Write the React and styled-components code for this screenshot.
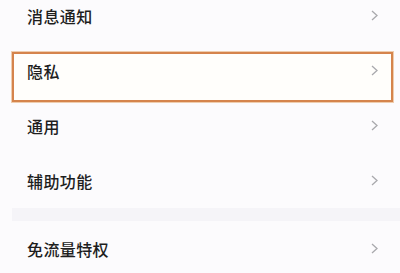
import React from 'react';
import styled, { createGlobalStyle } from 'styled-components';

const Global = createGlobalStyle`
  html, body {
    margin: 0;
    padding: 0;
    background: #fcfbfd;
    overflow: hidden;
  }
  body {
    font-family: "Noto Sans CJK SC", "Noto Sans", sans-serif;
  }
`;

const Page = styled.div`
  width: 400px;
  height: 273px;
  overflow: hidden;
  background: #fcfbfd;
`;

const List = styled.ul`
  list-style: none;
  margin: -12px 0 0 0;
  padding: 0;
`;

const Row = styled.li`
  position: relative;
  height: 55px;
  display: flex;
  align-items: center;
  justify-content: space-between;
  padding: 0 22px 0 27px;
  box-sizing: border-box;
`;

const Label = styled.span`
  position: relative;
  z-index: 1;
  font-size: 16px;
  font-weight: 500;
  color: #1e1e1e;
  letter-spacing: 0.4px;
`;

const Highlight = styled.div`
  position: absolute;
  left: 12px;
  right: 7px;
  top: 9px;
  bottom: -4px;
  background: #fffefb;
  border: 2px solid #d5844c;
  box-shadow: 0 0 0 1px #efcdae;
`;

const Gap = styled.li`
  height: 13px;
  background: #f5f4f8;
  margin: 0 0 0 12px;
`;

const Chevron = () => (
  <svg width="7" height="11" viewBox="0 0 7 11" style={{ position: 'relative', zIndex: 1 }}>
    <polyline points="1,1 6,5.5 1,10" fill="none" stroke="#a9a9ad" strokeWidth="1.3" />
  </svg>
);

const items = [
  { label: '消息通知' },
  { label: '隐私', active: true },
  { label: '通用' },
  { label: '辅助功能', gapAfter: true },
  { label: '免流量特权' },
];

export default function App() {
  return (
    <Page>
      <Global />
      <List>
        {items.map((item) => (
          <React.Fragment key={item.label}>
            <Row>
              {item.active && <Highlight />}
              <Label>{item.label}</Label>
              <Chevron />
            </Row>
            {item.gapAfter && <Gap />}
          </React.Fragment>
        ))}
      </List>
    </Page>
  );
}
